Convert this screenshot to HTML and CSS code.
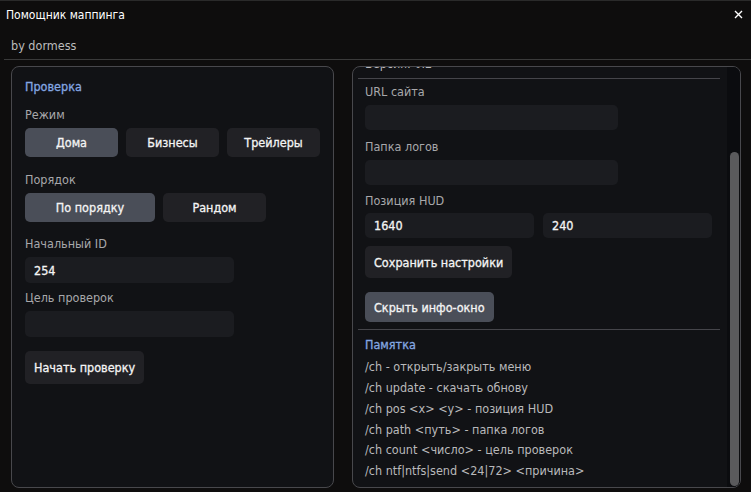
FILE: index.html
```html
<!DOCTYPE html>
<html lang="ru">
<head>
  <meta charset="UTF-8" />
  <title>Помощник маппинга</title>
  <link rel="stylesheet" href="styles.css">
</head>
<body>
  <div class="window">
    <div class="titlebar">
      <span>Помощник маппинга</span>
      <button class="close" title="Закрыть">
        <svg width="9" height="9" viewBox="0 0 9 9"><path d="M1 1L8 8M8 1L1 8" stroke="#fff" stroke-width="1.4" /></svg>
      </button>
    </div>
    <div class="subtitle">by dormess</div>

    <div class="panels">
      <div class="panel left">
        <div class="section-title">Проверка</div>

        <div class="group mode">
          <div class="label">Режим</div>
          <div class="btn-row">
            <button class="btn seg active">Дома</button>
            <button class="btn seg">Бизнесы</button>
            <button class="btn seg">Трейлеры</button>
          </div>
        </div>

        <div class="group order-group">
          <div class="label">Порядок</div>
          <div class="btn-row">
            <button class="btn order active">По порядку</button>
            <button class="btn order narrow">Рандом</button>
          </div>
        </div>

        <div class="group start-id">
          <div class="label">Начальный ID</div>
          <input class="input short" type="text" value="254">
        </div>

        <div class="group">
          <div class="label">Цель проверок</div>
          <input class="input short" type="text" value="">
        </div>

        <button class="btn action start">Начать проверку</button>
      </div>

      <div class="panel right">
        <div class="scroll-view">
          <div class="cmd">Версия: 0.2</div>
          <div class="sep top-sep"></div>

          <div class="group url-group">
            <div class="label">URL сайта</div>
            <input class="input wide" type="text" value="">
          </div>
          <div class="group logs-group">
            <div class="label">Папка логов</div>
            <input class="input wide" type="text" value="">
          </div>
          <div class="group hud-group">
            <div class="label">Позиция HUD</div>
            <div class="pair">
              <input class="input" type="text" value="1640">
              <input class="input" type="text" value="240">
            </div>
          </div>

          <button class="btn action save">Сохранить настройки</button>
          <button class="btn action active hide">Скрыть инфо-окно</button>

          <div class="sep"></div>
          <div class="section-title memo">Памятка</div>
          <div class="cmd">/ch - открыть/закрыть меню</div>
          <div class="cmd">/ch update - скачать обнову</div>
          <div class="cmd">/ch pos &lt;x&gt; &lt;y&gt; - позиция HUD</div>
          <div class="cmd">/ch path &lt;путь&gt; - папка логов</div>
          <div class="cmd">/ch count &lt;число&gt; - цель проверок</div>
          <div class="cmd">/ch ntf|ntfs|send &lt;24|72&gt; &lt;причина&gt;</div>
        </div>
        <div class="scrollbar"><div class="thumb"></div></div>
      </div>
    </div>
  </div>
</body>
</html>
```

FILE: styles.css
```css
* {
  box-sizing: border-box;
}

html, body {
  margin: 0;
  height: 100%;
  background: #0e0d0d;
}

body {
  font-family: 'DejaVu Sans Condensed', 'DejaVu Sans', sans-serif;
  font-stretch: condensed;
  font-size: 12.5px;
  color: #eee;
}

.window {
  height: 492px;
  display: flex;
  flex-direction: column;
  background: #0e0d0d;
  border-top: 1px solid #2a2a2a;
}

.titlebar {
  height: 27px;
  display: flex;
  align-items: center;
  justify-content: space-between;
  padding: 0 6px;
  color: #fff;
  font-size: 12px;
}

.close {
  background: none;
  border: none;
  padding: 0;
  width: 12px;
  height: 12px;
  display: flex;
  align-items: center;
  justify-content: center;
  margin-right: 1px;
  cursor: pointer;
}

.subtitle {
  margin-left: 4px;
  padding: 10px 7px 5px;
  line-height: 16px;
  color: #bcbcbc;
  border-bottom: 1px solid #3a3a3a;
}

.panels {
  flex: 1;
  min-height: 0;
  display: flex;
  gap: 18px;
  padding: 6px 10px 4px 11px;
}

.panel {
  border: 1px solid #48484c;
  border-radius: 8px;
  background: #111215;
}

.left {
  width: 323px;
  padding: 12px 13px 11px;
  display: flex;
  flex-direction: column;
  align-items: flex-start;
}

.right {
  flex: 1;
  display: flex;
  overflow: hidden;
}

/* content is shown scrolled to the bottom */
.scroll-view {
  flex: 1;
  min-width: 0;
  overflow: hidden;
  display: flex;
  flex-direction: column;
  justify-content: flex-end;
  align-items: flex-start;
  padding: 0 15px 5px 12px;
}

.scroll-view > * {
  flex-shrink: 0;
}

.scrollbar {
  width: 13px;
  background: #0b0c0f;
  padding: 85px 1px 1px 3px;
  display: flex;
}

.thumb {
  flex: 1;
  background: #5a5a5c;
  border-radius: 5px;
}

.section-title {
  line-height: 16px;
  color: #84a7e2;
  -webkit-text-stroke: 0.3px #84a7e2;
}

.label {
  line-height: 16px;
  color: #a8a8ab;
}

.group {
  display: flex;
  flex-direction: column;
  align-items: flex-start;
  gap: 5px;
  margin-top: 7px;
  width: 100%;
}

.group.mode {
  margin-top: 12px;
}

.group.order-group {
  margin-top: 15px;
}

.group.start-id {
  margin-top: 14px;
}

.group.url-group {
  margin-top: 5px;
}

.group.logs-group {
  margin-top: 9px;
}

.group.hud-group {
  margin-top: 8px;
  gap: 4px;
}

.btn-row {
  display: flex;
  gap: 8px;
  width: 100%;
}

.btn {
  font-family: inherit;
  font-stretch: condensed;
  font-size: 12.5px;
  color: #f4f4f4;
  -webkit-text-stroke: 0.3px #f4f4f4;
  background: #212125;
  border: none;
  border-radius: 5px;
  cursor: pointer;
}

.btn.active {
  background: #4a4e58;
}

.seg {
  width: 93px;
  height: 29px;
}

.order {
  width: 130px;
  height: 29px;
}

.order.narrow {
  width: 103px;
}

.action {
  padding: 0 9px;
  text-align: left;
}

.start {
  margin-top: 14px;
  height: 33px;
}

.save {
  margin-top: 8px;
  height: 32px;
}

.hide {
  margin-top: 14px;
  height: 30px;
}

.input {
  font-family: inherit;
  font-stretch: condensed;
  font-size: 12.5px;
  color: #f4f4f4;
  -webkit-text-stroke: 0.3px #f4f4f4;
  background: #1b1c20;
  border: none;
  border-radius: 5px;
  height: 26px;
  padding: 0 9px;
  outline: none;
}

.input.short {
  width: 209px;
}

.input.wide {
  width: 253px;
}

.right .input {
  height: 25px;
}

.pair {
  display: flex;
  gap: 9px;
  width: 100%;
}

.pair .input {
  flex: 1;
  min-width: 0;
}

.sep {
  height: 1px;
  background: #45454a;
  align-self: stretch;
  margin: 7px -8px 0 -7px;
}

.top-sep {
  margin-top: 3px;
}

.memo {
  margin-top: 7px;
  margin-bottom: 4px;
}

.cmd {
  line-height: 20.8px;
  color: #b9b9bb;
}
```
